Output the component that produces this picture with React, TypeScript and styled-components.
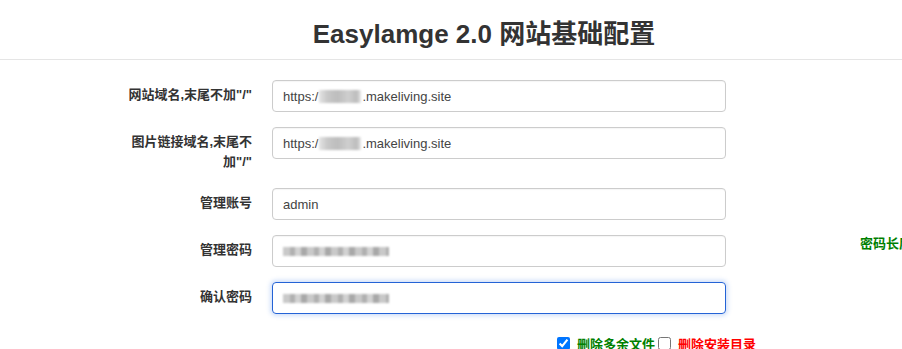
import React from 'react'
import styled, { createGlobalStyle } from 'styled-components'

const GlobalStyle = createGlobalStyle`
  html, body {
    margin: 0;
    padding: 0;
    background: #fff;
    overflow: hidden;
  }
  body {
    font-family: "Liberation Sans", Arial, "Noto Sans CJK SC", sans-serif;
    color: #333;
  }
`

const Page = styled.div`
  width: 968px;
`

const Header = styled.div`
  padding: 20px 0 10px;
  border-bottom: 1px solid #e5e5e5;
  text-align: center;
  h1 {
    margin: 0;
    font-size: 26px;
    line-height: 29px;
    font-weight: bold;
    color: #333;
  }
`

const Form = styled.form`
  margin-top: 20px;
  padding-left: 126px;
  display: grid;
  grid-template-columns: 126px 454px auto;
  column-gap: 20px;
  row-gap: 15px;
  align-items: start;
`

const Label = styled.label`
  text-align: right;
  font-size: 13px;
  font-weight: bold;
  line-height: 20px;
  padding-top: 5px;
  padding-bottom: 1px;
  color: #333;
`

const Field = styled.div<{ $focus?: boolean }>`
  height: 32px;
  box-sizing: border-box;
  border: 1px solid ${(p) => (p.$focus ? '#2463d6' : '#ccc')};
  border-radius: 4px;
  box-shadow: ${(p) => (p.$focus ? '0 0 4px 2px rgba(70, 130, 230, 0.25)' : 'inset 0 1px 1px rgba(0,0,0,0.04)')};
  padding: 0 10px;
  display: flex;
  align-items: center;
  font-size: 13px;
  color: #444;
  white-space: nowrap;
`

const Smudge = styled.span<{ $w: number }>`
  display: inline-block;
  width: ${(p) => p.$w}px;
  height: 13px;
  background: linear-gradient(90deg, #e4e4e4 0%, #c8c8c8 20%, #bdbdbd 45%, #cfcfcf 70%, #bcbcbc 90%, #e8e8e8 100%);
  filter: blur(1.2px);
  margin: 0 1px;
`

const Dots = styled.span`
  display: inline-block;
  width: 106px;
  height: 9px;
  background: repeating-linear-gradient(
    90deg,
    #c9c9c9 0px,
    #c9c9c9 7px,
    #b0b0b0 7px,
    #b0b0b0 12px,
    #d2d2d2 12px,
    #d2d2d2 18px,
    #a8a8a8 18px,
    #a8a8a8 24px
  );
  filter: blur(0.8px);
`

const Help = styled.div`
  margin-left: 114px;
  margin-top: -2px;
  font-size: 13px;
  font-weight: bold;
  color: #008000;
  white-space: nowrap;
`

const Options = styled.div`
  grid-column: 2 / 4;
  padding-left: 282px;
  display: flex;
  align-items: center;
  margin-top: 5px;
  font-size: 13px;
  font-weight: bold;
  input {
    margin: 0 7px 0 3px;
    width: 13px;
    height: 13px;
  }
`

const Option = styled.span<{ $color: string }>`
  color: ${(p) => p.$color};
`

export default function App() {
  return (
    <Page>
      <GlobalStyle />
      <Header>
        <h1>Easylamge 2.0 网站基础配置</h1>
      </Header>
      <Form>
        <Label>网站域名,末尾不加"/"</Label>
        <Field>
          https:/<Smudge $w={42} />.makeliving.site
        </Field>
        <div />

        <Label>图片链接域名,末尾不加"/"</Label>
        <Field>
          https:/<Smudge $w={42} />.makeliving.site
        </Field>
        <div />

        <Label>管理账号</Label>
        <Field>admin</Field>
        <div />

        <Label>管理密码</Label>
        <Field>
          <Dots />
        </Field>
        <Help>密码长度不少于6位</Help>

        <Label>确认密码</Label>
        <Field $focus>
          <Dots />
        </Field>
        <div />

        <Options>
          <input type="checkbox" defaultChecked />
          <Option $color="#008000">删除多余文件</Option>
          <input type="checkbox" />
          <Option $color="#ff0000">删除安装目录</Option>
        </Options>
      </Form>
    </Page>
  )
}
